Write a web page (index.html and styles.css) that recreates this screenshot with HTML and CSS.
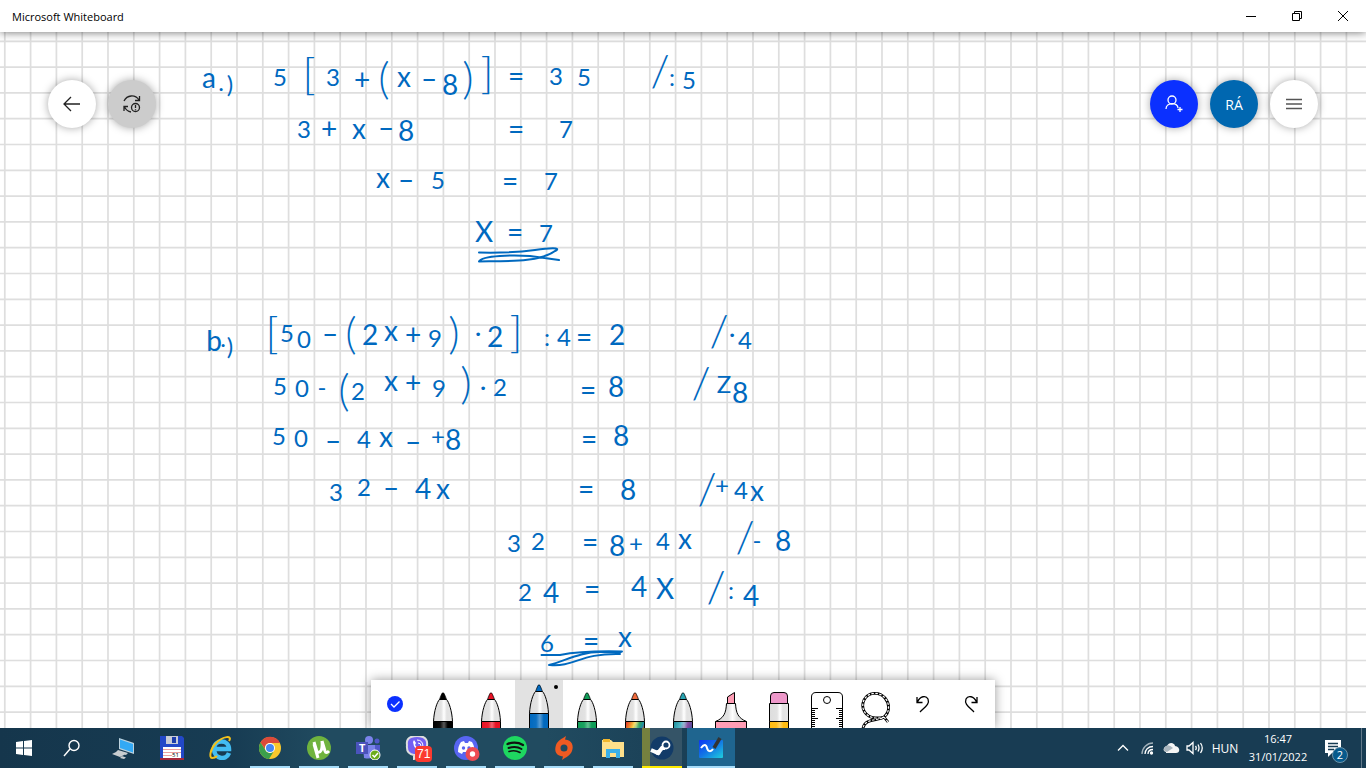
FILE: index.html
```
<!DOCTYPE html>
<html lang="hu">
<head>
<meta charset="utf-8">
<title>Microsoft Whiteboard</title>
<link rel="stylesheet" href="styles.css">
</head>
<body>

<svg class="defs" aria-hidden="true">
  <defs>
    <linearGradient id="shine">
      <stop offset="0" stop-color="#ddd"/><stop offset=".4" stop-color="#e2e2e2"/>
      <stop offset=".55" stop-color="#fff"/><stop offset=".7" stop-color="#e2e2e2"/><stop offset="1" stop-color="#e6e6e6"/>
    </linearGradient>
    <linearGradient id="gloss">
      <stop offset="0" stop-color="#fff" stop-opacity="0"/><stop offset=".35" stop-color="#fff" stop-opacity=".05"/>
      <stop offset=".55" stop-color="#fff" stop-opacity=".35"/><stop offset=".75" stop-color="#fff" stop-opacity="0"/>
    </linearGradient>
    <linearGradient id="rainbow" x2="1" y2=".4">
      <stop offset="0" stop-color="#d8232a"/><stop offset=".25" stop-color="#ef7d22"/><stop offset=".45" stop-color="#f5d13c"/>
      <stop offset=".65" stop-color="#3aa655"/><stop offset=".85" stop-color="#1d8fa5"/><stop offset="1" stop-color="#e23c2e"/>
    </linearGradient>
    <linearGradient id="galaxy" x2="1" y2=".4">
      <stop offset="0" stop-color="#188a96"/><stop offset=".4" stop-color="#4bb4c4"/>
      <stop offset=".7" stop-color="#8a4aa0"/><stop offset="1" stop-color="#3d4f9b"/>
    </linearGradient>
    <symbol id="pen" viewBox="0 0 48 60">
      <path d="M14.5 60V42C15 31 19 19 22 14Q24 11.500 26 14C29 19 33 31 33.500 42V60Z" fill="url(#shine)"/>
      <path class="pen-tip" d="M20.500 20L22.500 14Q24 11.500 25.500 14L27.500 20Z"/>
      <path class="pen-band" d="M14.500 41.500H33.500V60H14.500Z"/>
      <path d="M14.500 42H33.500V60H14.500Z" fill="url(#gloss)"/>
      <path d="M14.500 60V41.500C15 31 18 22 20.500 19.500H27.500C30 22 33 31 33.500 41.500V60M14.500 41.500H33.500" fill="none" stroke="#000"/>
      <path d="M20.500 19.500L22.500 14.500Q24 11 25.500 14.500L27.500 19.500" fill="none" stroke="#000" stroke-width=".7"/>
    </symbol>
    <!-- 5 squares per tile -->
    <pattern id="grid" width="129" height="129" patternUnits="userSpaceOnUse">
      <path d="M4.800 0V129M30.600 0V129M56.400 0V129M82.200 0V129M108 0V129M0 15.500H129M0 41.300H129M0 67.100H129M0 92.900H129M0 118.700H129" stroke="#000" stroke-opacity=".13" stroke-width="1.700"/>
    </pattern>
  </defs>
</svg>

<header class="titlebar">
  <h1>Microsoft Whiteboard</h1>
  <div class="window-buttons">
    <button aria-label="Minimize"><svg width="10" height="10"><path d="M0 5.500H10"/></svg></button>
    <button aria-label="Restore"><svg width="10" height="10"><path d="M.5 2.500H7.500V9.500H.5ZM2.500 2.500V.5H9.500V7.500H7.500"/></svg></button>
    <button aria-label="Close"><svg width="10" height="10"><path d="M0 0L10 10M10 0L0 10"/></svg></button>
  </div>
</header>

<main class="board">
  <svg class="canvas">
    <g transform="translate(0 -32)">
      <rect width="100%" height="2000" fill="url(#grid)"/>
      <g class="ink">
        <text x="209 221 230" y="88 91 93"><tspan class="x">a</tspan>.)</text>
        <text x="280 309 333 362 384 404 429 450 468 487 516 556 584 660 672 689" y="86 90 86 90 94 87 89 95 94 89 86 85 86 86 86 89">5<tspan class="big">[</tspan>3<tspan class="op">+</tspan><tspan class="big">(</tspan><tspan class="x">x</tspan><tspan class="op">–</tspan><tspan class="mid">8</tspan><tspan class="big">)]</tspan><tspan class="op">=</tspan>35<tspan class="big">/</tspan>:5</text>
        <text x="304 329 359 386 406 516 566" y="138 139 139 138 141 139 138">3<tspan class="op">+</tspan><tspan class="x">x</tspan><tspan class="op">–</tspan><tspan class="mid">8</tspan><tspan class="op">=</tspan>7</text>
        <text x="383 406 438 510 551" y="188 190 189 191 190"><tspan class="x">x</tspan><tspan class="op">–</tspan>5<tspan class="op">=</tspan>7</text>
        <text x="484 515 546" y="242 242 242"><tspan class="x">X</tspan><tspan class="op">=</tspan>7</text>
        <path d="M479 252.500C500 253 520 252 535 250C548 248 563 247 555 251C540 262 510 261 479 261.500C482 255 515 255 530 256L559 260"/>

        <text x="214 223 230" y="351 347 355"><tspan class="mid">b</tspan>.)</text>
        <text x="272 287 304 330 351 370 391 413 435 454 478 495 516 547 564 584 617 719 732 745" y="349 342 348 344 349 345 341 345 347 349 341 347 348 346 346 347 345 346 342 349"><tspan class="big">[</tspan>50<tspan class="op">–</tspan><tspan class="big">(</tspan><tspan class="mid">2</tspan><tspan class="x">x</tspan><tspan class="op">+</tspan>9<tspan class="big">)</tspan>·<tspan class="mid">2</tspan><tspan class="big">]</tspan>:4<tspan class="op">=</tspan><tspan class="mid">2</tspan><tspan class="big">/</tspan>·4</text>
        <text x="280 302 322 344 358 391 413 439 466 483 500 588 616 701 724 740" y="395 397 396 406 400 391 393 397 399 395 396 400 397 398 393 403">50-<tspan class="big">(</tspan>2<tspan class="x">x</tspan><tspan class="op">+</tspan>9<tspan class="big">)</tspan>·2<tspan class="op">=</tspan><tspan class="mid">8</tspan><tspan class="big">/</tspan>Z<tspan class="mid">8</tspan></text>
        <text x="279 301 333 364 386 413 438 453 589 621" y="445 447 451 448 447 452 445 450 449 446">50<tspan class="op">–</tspan>4<tspan class="x">x</tspan><tspan class="op">–</tspan>+<tspan class="mid">8</tspan><tspan class="op">=</tspan><tspan class="mid">8</tspan></text>
        <text x="336 364 391 423 443 586 628 707 722 741 757" y="501 496 498 499 499 499 500 504 494 499 501">32<tspan class="op">–</tspan><tspan class="mid">4</tspan><tspan class="x">x</tspan><tspan class="op">=</tspan><tspan class="mid">8</tspan><tspan class="big">/</tspan>+4<tspan class="x">x</tspan></text>
        <text x="514 538 590 617 636 663 685 745 757 783" y="552 550 552 556 552 550 549 552 549 551">32<tspan class="op">=</tspan><tspan class="mid">8</tspan>+4<tspan class="x">x</tspan><tspan class="big">/</tspan>-<tspan class="mid">8</tspan></text>
        <text x="525 551 592 639 665 716 731 751" y="601 603 599 597 599 602 599 606">2<tspan class="mid">4</tspan><tspan class="op">=</tspan><tspan class="mid">4</tspan><tspan class="x">X</tspan><tspan class="big">/</tspan>:<tspan class="mid">4</tspan></text>
        <text x="547 591 625" y="652 651 647">6<tspan class="op">=</tspan><tspan class="x">x</tspan></text>
        <path d="M541.500 655H560C580 651 600 651 622 651.500M549 665C565 661 580 652 600 652H621M620 654C580 653 575 667 550 665"/>
      </g>
    </g>
  </svg>

  <div class="overlay">
    <nav class="round-buttons">
      <button class="round" aria-label="Back"><svg width="24" height="24"><path d="M4 12H20M11 5L4 12L11 19"/></svg></button>
      <button class="round offline" aria-label="Not syncing">
        <svg width="24" height="24"><path d="M4 9C7 3 15 2 19 8M19.500 4V8.500H15M8 14.500H4V19M4.500 15C6 18 8 19.500 11 20"/><circle cx="15.500" cy="15.500" r="4"/><path d="M15.500 13V16M15.500 17.200V18.200"/></svg>
      </button>
    </nav>
    <nav class="round-buttons">
      <button class="round invite" aria-label="Invite"><svg width="24" height="24"><circle cx="10" cy="8" r="4"/><path d="M4 17C4 10 16 10 16 16M18 15V20M15.500 17.500H20.500"/></svg></button>
      <button class="round account">RÁ</button>
      <button class="round menu" aria-label="Menu"><svg width="24" height="24"><path d="M4 7.500H20M4 12H20M4 16.500H20"/></svg></button>
    </nav>
  </div>

  <div class="tool-dock">
    <div class="tools" role="toolbar" aria-label="Drawing tools">
      <button aria-label="Done"><svg width="48" height="48"><circle cx="24" cy="24" r="8" fill="#0b30ff"/><path d="M20 24L23 27L28.500 21.500" fill="none" stroke="#fff" stroke-width="1.300"/></svg></button>
      <button class="pen black" aria-label="Black pen"><svg width="48" height="60"><use href="#pen"/></svg></button>
      <button class="pen red" aria-label="Red pen"><svg width="48" height="60"><use href="#pen"/></svg></button>
      <button class="pen blue selected" aria-label="Blue pen" aria-pressed="true"><svg width="48" height="60"><use href="#pen"/></svg></button>
      <button class="pen green" aria-label="Green pen"><svg width="48" height="60"><use href="#pen"/></svg></button>
      <button class="pen rainbow" aria-label="Rainbow pen"><svg width="48" height="60"><use href="#pen"/></svg></button>
      <button class="pen galaxy" aria-label="Galaxy pen"><svg width="48" height="60"><use href="#pen"/></svg></button>
      <button aria-label="Highlighter">
        <svg width="48" height="48" stroke="#000"><path d="M20.500 24V17L27.500 12.500V24Z" fill="#ff9db5"/><path d="M19.500 23.500H28.500C29 33 31 38 39.500 41.500H8.500C17 38 19 33 19.500 23.500Z" fill="url(#shine)"/><path d="M8.500 41.500H39.500V50H8.500Z" fill="#ff9db5"/></svg>
      </button>
      <button aria-label="Eraser">
        <svg width="48" height="48" stroke="#000"><path d="M15.500 24V16Q15.500 12.500 19 12.500H29Q32.500 12.500 32.500 16V24Z" fill="#ee98ca"/><path d="M14.500 23.500H33.500V41.500H14.500Z" fill="url(#shine)"/><path d="M14.500 41.500H33.500V50H14.500Z" fill="#ffbc13"/><path d="M15 42H33V50H15Z" fill="url(#gloss)" stroke="none"/></svg>
      </button>
      <button aria-label="Ruler">
        <svg width="48" height="48" stroke="#000" fill="none"><path d="M8.500 50V17Q8.500 12.500 13 12.500H35Q39.500 12.500 39.500 17V50" fill="#fff"/><circle cx="24" cy="20" r="3.500"/><path d="M9 28.500H15M9 30.500H12M9 32.500H12M9 34.500H12M9 36.500H12M9 38.500H15M9 40.500H12M9 42.500H12M9 44.500H12M9 46.500H12M39 28.500H33M39 30.500H36M39 32.500H36M39 34.500H36M39 36.500H36M39 38.500H33M39 40.500H36M39 42.500H36M39 44.500H36M39 46.500H36"/></svg>
      </button>
      <button aria-label="Lasso">
        <svg width="48" height="48" fill="none">
          <path d="M37 42L33 37C39 32 39 24 34 18C28 11 17 12 13 20C9 29 15 37 24 38C28 38 31 38 33 37C27 41 14 38 12 48" stroke="#000" stroke-width="2.800"/>
          <path d="M37 42L33 37C39 32 39 24 34 18C28 11 17 12 13 20C9 29 15 37 24 38C28 38 31 38 33 37C27 41 14 38 12 48" stroke="#fff" stroke-width="1.200" stroke-dasharray="2.500 1.500"/>
        </svg>
      </button>
      <button aria-label="Undo"><svg class="line" width="48" height="48"><path d="M18 17V22.500H23.500M18.500 22C21 16 27 15 29 19C31 24 26 27 21 32"/></svg></button>
      <button aria-label="Redo"><svg class="line" width="48" height="48"><path d="M30 17V22.500H24.500M29.500 22C27 16 21 15 19 19C17 24 22 27 27 32"/></svg></button>
    </div>
  </div>
</main>

<footer class="taskbar">
  <button class="start" aria-label="Start"><svg width="16" height="16" fill="#fff"><path d="M0 2L7 1V7.500H0ZM8 1L16 0V7.500H8ZM0 8.500H7V15L0 14ZM8 8.500H16V16L8 15Z"/></svg></button>
  <button class="start" aria-label="Search"><svg width="18" height="18" fill="none" stroke="#fff" stroke-width="1.400"><circle cx="11" cy="6.500" r="5"/><path d="M7 10L1 17"/></svg></button>
  <div class="apps">
    <button aria-label="This PC">
      <svg width="24" height="24"><path d="M8 2L23 7V18L8 13Z" fill="#bcd3df"/><path d="M9 3.500L22 8V16.500L9 12Z" fill="#32a9f5"/><path d="M7 14L17 17L15 19L5 16ZM1 18L6 15.500L14 18.500L9 21ZM11 20L15 21.500L13 23L9 22Z" fill="#c8cdd0"/></svg>
    </button>
    <button aria-label="Total Commander">
      <svg width="24" height="24"><path d="M0 0H22L24 2V24H0Z" fill="#2348c8"/><path d="M0 23H24" stroke="#a8273a" stroke-width="2"/><path d="M6 0H18V8H6Z" fill="#c8ccd6"/><path d="M12 1H16V7H12Z" fill="#1d3dab"/><path d="M3 11H21V22H3Z" fill="#fff"/><path d="M3 13.500H21M3 16.500H21M3 19.500H12" stroke="#eca0a0"/><text x="12" y="21" font-size="6">51</text></svg>
    </button>
    <button aria-label="Internet Explorer">
      <svg width="24" height="24" fill="none"><path d="M20 17C17 25 5 23 5 13C5 3 20 3 20 13H7" stroke="#43bdf2" stroke-width="4.500"/><path d="M20 5C24 -1 14 0 7 7C1 13 0 22 3 22C5 22 7 21 8 20" stroke="#f3c11b" stroke-width="2"/></svg>
    </button>
    <button class="running" aria-label="Chrome">
      <svg width="24" height="24"><circle cx="12" cy="12" r="11" fill="#f9c82d"/><path d="M2.500 6.500A11 11 0 0 1 22 7H12A5 5 0 0 0 7 13Z" fill="#db4a3a"/><path d="M2.500 6.500A11 11 0 0 0 11 23L16 15A5 5 0 0 1 7.500 14Z" fill="#3c9e4c"/><circle cx="12" cy="12" r="5" fill="#fff"/><circle cx="12" cy="12" r="4" fill="#4587f4"/></svg>
    </button>
    <button class="running" aria-label="uTorrent">
      <svg width="24" height="24"><circle cx="12" cy="12" r="12" fill="#6fb33e"/><path d="M7 6L10 16Q16 18 15 5M15 5L18 15Q19 18 22 15M7 8L11 22" fill="none" stroke="#fff" stroke-width="3"/></svg>
    </button>
    <button class="running" aria-label="Teams">
      <svg width="26" height="24"><circle cx="14" cy="4" r="4" fill="#7b83eb"/><circle cx="22" cy="5" r="2.500" fill="#5059c9"/><path d="M18 9H25V16Q24 20 19 20Z" fill="#5059c9"/><path d="M8 9H20V18Q18 24 9 22Z" fill="#7b83eb"/><path d="M1 6H13V18H1Z" fill="#4b53bc"/><text x="4" y="16" font-size="11" font-weight="bold" fill="#fff">T</text><circle cx="20" cy="19" r="5" fill="#6bac1b" stroke="#fff"/><path d="M17.500 19L19.500 21L23 17" fill="none" stroke="#fff" stroke-width="1.500"/></svg>
    </button>
    <button class="running" aria-label="Viber">
      <svg width="28" height="24"><path d="M8 1Q14 -1 20 1Q25 3 24 10Q24 18 18 19L11 23V19Q3 18 4 9Q3 3 8 1Z" fill="#7360f2" stroke="#ddd" stroke-width="2"/><path d="M10 6Q11 14 18 16L20 14L17 12L15 13L12 9L13 7L11 4Z" fill="#fff"/><path d="M14 4Q20 4 20 11M15 7Q18 7 18 10" stroke="#fff" fill="none"/></svg>
      <span class="badge">71</span>
    </button>
    <button class="running" aria-label="Discord">
      <svg width="24" height="24" overflow="visible"><circle cx="12" cy="12" r="12" fill="#5865f2"/><path d="M7 6L10 5L11 7H14L15 5L18 6Q21 11 20 16L16 18L15 16H9L8 18L4 16Q4 10 7 6Z" fill="#fff"/><circle cx="9.500" cy="12" r="1.700" fill="#5865f2"/><circle cx="15" cy="12" r="1.700" fill="#5865f2"/><circle cx="18.500" cy="18" r="7" fill="#ed4b53"/><circle cx="18.500" cy="18" r="2.700" fill="#fff"/></svg>
    </button>
    <button class="running" aria-label="Spotify">
      <svg width="24" height="24" fill="none" stroke="#111" stroke-linecap="round"><circle cx="12" cy="12" r="12" fill="#1ed760" stroke="none"/><path d="M4.500 8Q13 5 20 9" stroke-width="2.300"/><path d="M5.500 12Q13 9.500 18.500 13" stroke-width="1.900"/><path d="M6 15.500Q12 13.500 17 16.500" stroke-width="1.600"/></svg>
    </button>
    <button class="running" aria-label="Origin">
      <svg width="24" height="24"><path d="M14 0L13 3.500C20 4 22 10 20 15C18 20 14 21 10 24L11 20.500C4 20 2 15 4 9C6 4 10 3 14 0ZM12 8.500A3.500 3.500 0 1 0 12 15.500A3.500 3.500 0 1 0 12 8.500Z" fill="#f05a22" fill-rule="evenodd"/></svg>
    </button>
    <button class="running" aria-label="File Explorer">
      <svg width="24" height="24"><path d="M1 4H10L12 6H23V21H1Z" fill="#ffe08a"/><path d="M2 3H9V6H2Z" fill="#f2b72d"/><path d="M5 13H19V22H15V17H9V22H5Z" fill="#3bb0e8"/></svg>
    </button>
    <button class="running steam" aria-label="Steam">
      <svg width="24" height="24"><circle cx="12" cy="12" r="11.500" fill="#123b68"/><path d="M1 14L8 17L12 12L15 12" stroke="#fff" stroke-width="4" fill="none"/><circle cx="16" cy="9" r="3.500" fill="#123b68" stroke="#fff" stroke-width="1.800"/><circle cx="8" cy="16.500" r="2.500" fill="#fff"/></svg>
    </button>
    <button class="running active" aria-label="Microsoft Whiteboard">
      <svg width="24" height="24"><linearGradient id="wb" x2="1" y2="1"><stop offset="0" stop-color="#0c35f5"/><stop offset=".5" stop-color="#1377e5"/><stop offset="1" stop-color="#1ecfdd"/></linearGradient><rect y="4" width="24" height="18" rx="1" fill="url(#wb)"/><path d="M2 12C5 8 7 8 8 12C9 16 12 16 14 13" fill="none" stroke="#fff" stroke-width="2"/><path d="M15 12L21 2" stroke="#333" stroke-width="3.500"/></svg>
    </button>
  </div>
  <div class="tray">
    <button aria-label="Show hidden icons"><svg width="16" height="16"><path d="M3 10.500L8 5.500L13 10.500"/></svg></button>
    <button aria-label="Network"><svg width="16" height="16"><path d="M3 14C3 8 8 3 14 3" opacity=".6"/><path d="M6 14C6 10 9 6.500 14 6.500M9 14C9 11 11 9.500 14 9.500"/><circle cx="12.500" cy="13" r="1" fill="#fff"/></svg></button>
    <button aria-label="OneDrive"><svg width="18" height="16"><path d="M4 12C-1 10 3 6 5 6C7 1 13 3 13 6C19 7 18 13 14 13H4Z" fill="#f5f5f5" stroke="none"/><path d="M3 7Q6 3 11 8L5 12Q0 11 3 7Z" fill="#aab6be" stroke="none"/></svg></button>
    <button aria-label="Volume"><svg width="18" height="16"><path d="M1 6H3L7 2.500V13.500L3 10H1ZM9.500 6Q11 8 9.500 10M12 4.500Q14 8 12 11.500M14.500 3Q18 8 14.500 13"/></svg></button>
    <button class="lang">HUN</button>
    <button class="clock"><time datetime="2022-01-31T16:47">16:47<br>31/01/2022</time></button>
    <button class="notices" aria-label="Notifications"><svg width="24" height="24"><path d="M0 4H16V17H7L3 21V17H0Z" fill="#fff" stroke="none"/><path d="M3 7.500H13M3 10.500H13M3 13.500H9" stroke="#183c53"/></svg><span class="count">2</span></button>
    <button class="show-desktop" aria-label="Show desktop"></button>
  </div>
</footer>

</body>
</html>
```
FILE: styles.css
```
* { box-sizing: border-box; }
html, body { height: 100%; }
body {
  margin: 0;
  display: flex;
  flex-direction: column;
  overflow: hidden;
  background: #fff;
  color: #000;
  font-family: "Open Sans", "Noto Sans", sans-serif;
  font-size: 12px;
}
button { border: 0; padding: 0; margin: 0; background: none; color: inherit; font: inherit; }
button svg { display: block; }
.defs { position: absolute; width: 0; height: 0; }

/* title bar */
.titlebar {
  position: relative;
  display: flex;
  flex: none;
  justify-content: space-between;
  align-items: center;
  height: 32px;
  padding-left: 12px;
  background: #fff;
  box-shadow: 0 0 10px rgba(0,0,0,.6);
  z-index: 2;
}
.titlebar h1 { margin: 0; font-size: 11px; font-weight: normal; }
.window-buttons { display: flex; height: 100%; }
.window-buttons button { display: grid; place-items: center; width: 46px; }
.window-buttons path { fill: none; stroke: #000; }

/* board */
.board { position: relative; flex: 1; min-height: 0; overflow: hidden; }
.canvas { display: block; width: 100%; height: 100%; }
.ink text {
  fill: #0069bf;
  font-family: Lato, "Open Sans", sans-serif;
  font-size: 24px;
  text-anchor: middle;
}
.ink .mid, .ink .x, .ink .op { font-size: 28px; }
.ink .big { font-size: 44px; font-weight: 300; }
.ink path { fill: none; stroke: #0069bf; stroke-width: 2; stroke-linecap: round; stroke-linejoin: round; }

.overlay {
  position: absolute;
  top: 48px;
  left: 48px;
  right: 48px;
  display: flex;
  justify-content: space-between;
}
.round-buttons { display: flex; gap: 12px; }
.round {
  display: grid;
  place-items: center;
  width: 48px;
  height: 48px;
  border-radius: 50%;
  background: #fff;
  box-shadow: 0 0 8px rgba(0,0,0,.35);
}
.round path, .round circle { fill: none; stroke: #222; stroke-width: 1.3; }
.round.offline { background: #ccc; }
.round.invite { background: #0b30ff; }
.round.invite path, .round.invite circle { stroke: #fff; }
.round.account { background: #0067b0; color: #fff; font-size: 14px; }
.round.menu path { stroke: #555; stroke-width: 1.6; }

/* pens */
.tool-dock {
  position: absolute;
  left: 0;
  right: 0;
  bottom: 0;
  display: flex;
  justify-content: center;
}
.tools {
  display: flex;
  height: 48px;
  background: #fff;
  box-shadow: 0 0 10px rgba(0,0,0,.4);
}
.tools button { width: 48px; height: 48px; overflow: hidden; display: flex; align-items: flex-start; }
.tools .selected { position: relative; background: #e2e2e2; }
.selected svg { margin-top: -8px; }
.selected::after {
  content: "";
  position: absolute;
  top: 5px;
  right: 5px;
  width: 4px;
  height: 4px;
  border-radius: 50%;
  background: #000;
}
.pen-tip { fill: var(--tip); }
.pen-band { fill: var(--band); }
.black { --tip: #000; --band: #000; }
.red { --tip: #e81224; --band: #e81224; }
.blue { --tip: #0069bf; --band: #0069bf; }
.green { --tip: #0f9d58; --band: #0f9d58; }
.rainbow { --tip: #ef6a3c; --band: url(#rainbow); }
.galaxy { --tip: #28a3b1; --band: url(#galaxy); }
.line path { fill: none; stroke: #000; stroke-width: 1.3; }

/* taskbar */
.taskbar {
  display: flex;
  flex: none;
  height: 40px;
  background: linear-gradient(90deg, #15364c, #173c53 17%, #214b60 24%, #214b60 40%, #183c53 53%, #183c53);
  color: #fff;
  z-index: 1;
}
.taskbar button { display: grid; place-items: center; }
.start { width: 48px; }
.apps { display: flex; gap: 1px; flex: 1; margin-left: 3px; }
.apps button { position: relative; width: 48px; }
.running { background: linear-gradient(#a6dcf9, #a6dcf9) 50% 100% / 40px 2px no-repeat; }
.apps .steam {
  background: linear-gradient(#ffeb00, #ffeb00) 50% 100% / 40px 2px no-repeat,
    linear-gradient(#75803f, #75803f) 4px 0 / 8px 100% no-repeat,
    linear-gradient(#355467, #355467) 12px 0 / 32px 100% no-repeat;
}
.apps .active { background: linear-gradient(#a6dcf9, #a6dcf9) 0 100% / 100% 2px no-repeat #1f658f; }
.badge {
  position: absolute;
  left: 22px;
  top: 18px;
  padding: 0 2px;
  border-radius: 4px;
  background: #fb3a30;
  font: 12px/16px "Liberation Sans", sans-serif;
}
.tray { display: flex; }
.tray button { width: 24px; }
.tray svg { fill: none; stroke: #fff; stroke-width: 1.3; }
.tray .lang { width: 36px; }
.tray .clock { width: 70px; font-size: 11px; line-height: 18px; }
.tray .notices { position: relative; width: 48px; }
.count {
  position: absolute;
  left: 19px;
  top: 19px;
  width: 16px;
  height: 16px;
  border: 1px solid #6d94aa;
  border-radius: 50%;
  background: #075a8c;
  font-size: 11px;
  line-height: 14px;
}
.tray .show-desktop { width: 5px; border-left: 1px solid #62798a; }
```
